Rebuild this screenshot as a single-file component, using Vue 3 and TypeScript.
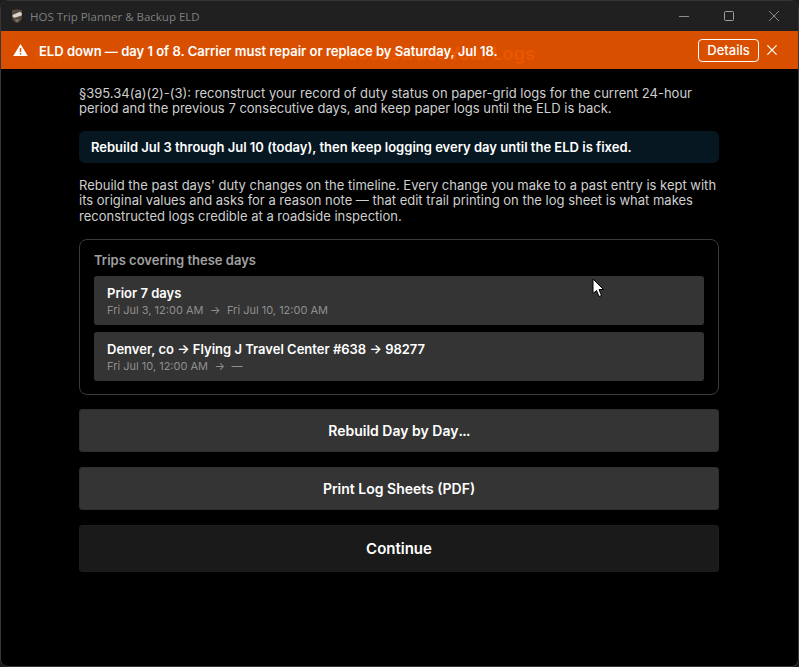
<script setup lang="ts">
interface Trip { title: string; from: string; to: string }
const trips: Trip[] = [
  { title: 'Prior 7 days', from: 'Fri Jul 3, 12:00 AM', to: 'Fri Jul 10, 12:00 AM' },
  { title: 'Denver, co → Flying J Travel Center #638 → 98277', from: 'Fri Jul 10, 12:00 AM', to: '—' },
]
</script>

<template>
  <div class="window">
    <header class="titlebar">
      <div class="brand">
        <svg class="logo" width="12" height="14" viewBox="0 0 12 14">
          <path d="M1 1.500 C3 .3 9 .3 11 1.500 V8 C11 11 8 13.500 6 14 C4 13.500 1 11 1 8 Z" fill="#55493c" />
          <path d="M1.500 6 L9 2.800 L11 4.500 L10.500 6.500 L4 8.800 L1.800 8 Z" fill="#d9d5cd" />
          <path d="M3.500 10.500 H8.500 L6 13 Z" fill="#8a7a66" />
        </svg>
        <span class="app-name">HOS Trip Planner &amp; Backup ELD</span>
      </div>
      <div class="win-controls">
        <svg width="12" height="12" viewBox="0 0 12 12"><path d="M1 6.500 H11" stroke="#8c8c8c" fill="none" /></svg>
        <svg width="12" height="12" viewBox="0 0 12 12"><rect x="1.500" y="1.500" width="9" height="9" rx="1" stroke="#a0a0a0" fill="none" /></svg>
        <svg width="12" height="12" viewBox="0 0 12 12"><path d="M1 1 L11 11 M11 1 L1 11" stroke="#8c8c8c" fill="none" /></svg>
      </div>
    </header>

    <div class="banner">
      <span class="ghost-title">Reconstruct Your Logs</span>
      <span class="ghost-close">Close</span>
      <svg class="warn" width="15" height="12" viewBox="0 0 15 12">
        <path fill-rule="evenodd" d="M7.500 0 L14.800 12 H.2 Z M6.800 4 H8.200 V8 H6.800 Z M6.800 9 H8.200 V10.400 H6.800 Z" fill="#fff" />
      </svg>
      <strong class="banner-text">ELD down — day 1 of 8. Carrier must repair or replace by Saturday, Jul 18.</strong>
      <button class="details">Details</button>
      <svg class="dismiss" width="10" height="10" viewBox="0 0 10 10"><path d="M.4 .4 L9.600 9.600 M9.600 .4 L.4 9.600" stroke="#fff" stroke-width="1.200" fill="none" /></svg>
    </div>

    <main class="content">
      <p class="lead">§395.34(a)(2)-(3): reconstruct your record of duty status on paper-grid logs for the current 24-hour period and the previous 7 consecutive days, and keep paper logs until the ELD is back.</p>
      <div class="callout">Rebuild Jul 3 through Jul 10 (today), then keep logging every day until the ELD is fixed.</div>
      <p class="lead body">Rebuild the past days' duty changes on the timeline. Every change you make to a past entry is kept with its original values and asks for a reason note — that edit trail printing on the log sheet is what makes reconstructed logs credible at a roadside inspection.</p>

      <section class="trips">
        <h2 class="trips-title">Trips covering these days</h2>
        <div v-for="trip in trips" :key="trip.title" class="trip">
          <div class="trip-title">{{ trip.title }}</div>
          <div class="trip-time">{{ trip.from }}<span class="arrow">→</span>{{ trip.to }}</div>
        </div>
      </section>

      <button class="action first">Rebuild Day by Day<span class="dots">...</span></button>
      <button class="action">Print Log Sheets (PDF)</button>
      <button class="action primary">Continue</button>
    </main>

    <svg class="cursor" width="14" height="20" viewBox="0 0 14 20">
      <path d="M1 1 V15.500 L4.500 12.500 L7 18.500 L9.500 17.500 L7 11.500 H11.500 Z" fill="#fff" stroke="#000" stroke-width="1" />
    </svg>
  </div>
</template>

<style scoped>
.window {
  position: relative;
  box-sizing: border-box;
  width: 799px;
  height: 667px;
  overflow: hidden;
  display: flex;
  flex-direction: column;
  background: #000;
  border: 1px solid #35353b;
  border-radius: 8px;
  font-family: Inter, "Liberation Sans", sans-serif;
  color: #fff;
}
.titlebar {
  height: 30px;
  flex: none;
  display: flex;
  align-items: center;
  justify-content: space-between;
  background: #202020;
  padding: 0 18px 0 10px;
}
.brand { display: flex; align-items: center; gap: 7px; }
.logo { display: block; }
.app-name { font-family: "Open Sans", sans-serif; font-size: 11.500px; color: #7f7f7f; }
.win-controls { display: flex; align-items: center; gap: 33px; }
.win-controls svg { display: block; }
.banner {
  position: relative;
  height: 38px;
  flex: none;
  display: flex;
  align-items: center;
  background: #d94f00;
  padding: 0 21px 0 12px;
}
.ghost-title {
  position: absolute;
  right: 263px;
  top: 12px;
  font-size: 18px;
  font-weight: 700;
  color: #e85700;
  white-space: nowrap;
}
.ghost-close {
  position: absolute;
  left: 9px;
  top: 10px;
  width: 72px;
  height: 28px;
  box-sizing: border-box;
  padding: 6px 0 0 25px;
  background: #db5000;
  font-size: 13px;
  font-weight: 600;
  color: #e05500;
}
.warn { position: relative; flex: none; }
.banner-text {
  position: relative;
  margin: 1px 0 0 11px;
  flex: 1;
  font-size: 13px;
  font-weight: 600;
  white-space: nowrap;
}
.details {
  position: relative;
  flex: none;
  width: 61px;
  height: 23px;
  padding: 0;
  background: transparent;
  border: 1px solid #fff;
  border-radius: 4px;
  color: #fff;
  font: 500 13px Inter, "Liberation Sans", sans-serif;
}
.dismiss { position: relative; margin-left: 8px; flex: none; }
.content {
  width: 640px;
  margin-left: 78px;
  padding-top: 16.500px;
  display: flex;
  flex-direction: column;
}
.lead {
  margin: 0;
  font-size: 13px;
  line-height: 15.500px;
  color: #cfcfcf;
}
.callout {
  margin-top: 14.500px;
  height: 32px;
  display: flex;
  align-items: center;
  padding: 0 12px;
  background: #071722;
  border-radius: 6px;
  font-size: 13px;
  font-weight: 600;
}
.body { margin-top: 14.750px; }
.trips {
  margin-top: 15px;
  height: 155.500px;
  box-sizing: border-box;
  padding: 12px 14px 0;
  border: 1px solid #3a3a3a;
  border-radius: 8px;
}
.trips-title {
  margin: 0 0 8px;
  font-size: 13px;
  line-height: 16px;
  font-weight: 600;
  color: #a0a0a0;
}
.trip {
  height: 49px;
  box-sizing: border-box;
  padding: 8.500px 13px 0;
  margin-bottom: 7px;
  background: #343434;
  border-radius: 3px;
}
.trip-title { font-size: 13px; line-height: 16px; font-weight: 600; }
.trip-time { margin-top: 2px; font-size: 11px; line-height: 15px; color: #8f8f8f; }
.arrow { margin: 0 6.500px; }
.action {
  height: 43px;
  margin-top: 15px;
  padding: 0;
  background: #343434;
  border: 1px solid #2e2e2e;
  border-radius: 3px;
  color: #fff;
  font: 600 14px Inter, "Liberation Sans", sans-serif;
}
.dots { letter-spacing: -0.700px; }
.first { margin-top: 14.500px; }
.primary {
  height: 47px;
  background: #1a1a1a;
  border-color: #1d1d1d;
  font-size: 15px;
}
.cursor { position: absolute; left: 591px; top: 277px; }
</style>

<style>
html, body { margin: 0; background: #1c1c1c; }
</style>
